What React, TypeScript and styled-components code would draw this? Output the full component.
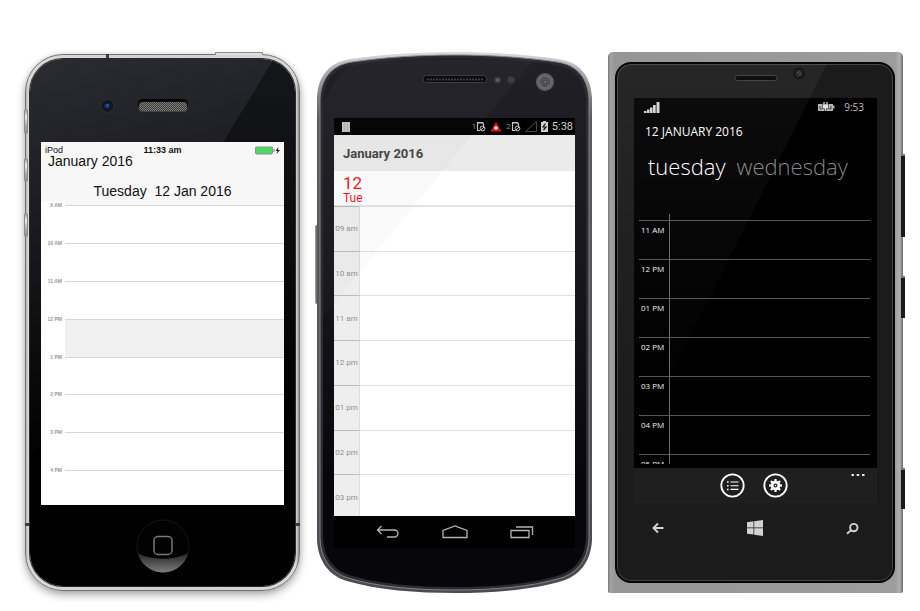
import React from "react";
import styled, { createGlobalStyle, css } from "styled-components";

const GlobalStyle = createGlobalStyle`
  *, *::before, *::after { box-sizing: border-box; }
  body { margin: 0; background: #fff; }
  h1, h2, p, ol { margin: 0; padding: 0; font-weight: 400; }
  ol { list-style: none; }
  button { margin: 0; padding: 0; border: 0; background: none; font: inherit; color: inherit; cursor: pointer; }
  svg { display: block; }
`;

const Stage = styled.main`
  display: grid;
  grid-template-columns: 276fr 275fr 295fr;
  column-gap: 16px;
  align-items: start;
  padding: 52px 17px 18px 25px;
`;

const SideKey = styled.span<{ $side: "left" | "right"; $top: number; $size: number; $kind: "silver" | "slate" | "black" }>`
  position: absolute;
  top: ${(p) => p.$top}px;
  height: ${(p) => p.$size}px;
  ${(p) => (p.$side === "left" ? "left: -2px;" : "right: -2px;")}
  width: 4px;
  ${(p) =>
    p.$kind === "silver" &&
    css`
      border: 1px solid #8a8a8a;
      border-radius: 2px;
      background: linear-gradient(#9b9b9b, #f4f4f4 30%, #b5b5b5 60%, #8d8d8d);
    `}
  ${(p) =>
    p.$kind === "slate" &&
    css`
      border-left: 1px solid #9a9a9c;
      border-radius: 2px;
      background: #6d6d72;
    `}
  ${(p) =>
    p.$kind === "black" &&
    css`
      border-top: 2px solid #777;
      background: #17191b;
    `}
`;

/* ---------- iOS ---------- */

const IosShell = styled.section`
  position: relative;
  margin: 2px 1px 0 0;
  padding: 4px;
  border: 1px solid #747474;
  border-radius: 38px;
  background: linear-gradient(90deg, #aeb0ae, #d8d8d6 2px, #d0d0d0 50%, #d8d8d8 calc(100% - 3px), #8c8c8c);
  box-shadow: 0 4px 8px rgba(0, 0, 0, 0.32), 0 0 5px rgba(0, 0, 0, 0.1);
  font-family: "Liberation Sans", Arial, sans-serif;
  color: #111;
`;

const IosPowerKey = styled.span`
  position: absolute;
  top: -3px;
  right: 36px;
  width: 48px;
  height: 3px;
  border: 1px solid #8f8f8f;
  border-bottom: 0;
  background: #dedede;
`;

const AntennaGap = styled.span<{ $place: "top" | "left" | "right" }>`
  position: absolute;
  background: #3c3c3c;
  ${(p) => p.$place === "top" && "top: -1px; left: 80px; width: 3px; height: 5px;"}
  ${(p) => p.$place === "left" && "left: -1px; bottom: 64px; width: 5px; height: 3px;"}
  ${(p) => p.$place === "right" && "right: -1px; bottom: 64px; width: 5px; height: 3px;"}
`;

const IosGlass = styled.div`
  position: relative;
  overflow: hidden;
  padding: 0 11px;
  border-radius: 33px;
  background: linear-gradient(180deg, #15161a, #0b0c0e 35%, #000 70%);
  box-shadow: 0 0 0 1px #2a2a2a;

  &::before {
    content: "";
    position: absolute;
    inset: 0;
    clip-path: polygon(0 0, 92% 0, 0 76%);
    background: linear-gradient(160deg, rgba(80, 82, 92, 0.36), rgba(70, 72, 80, 0.14) 40%, transparent 72%);
  }
`;

const Hardware = styled.div<{ $height: number }>`
  position: relative;
  display: flex;
  justify-content: center;
  height: ${(p) => p.$height}px;
`;

const IosScreen = styled.div`
  position: relative;
  height: 363px;
  overflow: hidden;
  background: #fff;
`;

const IosHeader = styled.header`
  height: 63px;
  padding-top: 3px;
  background: #f7f7f7;
`;

const IosStatus = styled.div`
  display: grid;
  grid-template-columns: 1fr auto 1fr;
  align-items: center;
  padding: 0 4px;
  font-size: 9px;
  line-height: 10px;

  b { font-weight: 700; }
  svg { justify-self: end; }
`;

const IosMonth = styled.h1`
  padding-left: 7px;
  font-size: 14px;
  line-height: 12px;
`;

const IosDate = styled.h2`
  padding-top: 16px;
  font-size: 14px;
  line-height: 16px;
  text-align: center;
  white-space: pre;
`;

const IosHours = styled.ol`
  display: grid;
  grid-template-rows: repeat(8, 1fr);
  height: 303px;
`;

const IosHour = styled.li`
  display: grid;
  grid-template-columns: 24px 1fr;
`;

const IosTime = styled.time`
  height: 8px;
  margin-top: -4px;
  padding-right: 3px;
  background: #fff;
  color: #999;
  font-size: 5px;
  font-weight: 700;
  line-height: 9px;
  text-align: right;
`;

const IosSlot = styled.div<{ $busy: boolean }>`
  border-top: 1px solid #d6d6d6;
  background: ${(p) => (p.$busy ? "#f0f0f0" : "#fff")};
`;

const HomeButton = styled.button`
  align-self: center;
  width: 54px;
  height: 54px;
`;

function IosPhone() {
  const hours = ["9 AM", "10 AM", "11 AM", "12 PM", "1 PM", "2 PM", "3 PM", "4 PM"];
  return (
    <IosShell aria-label="iOS calendar">
      <SideKey $side="left" $top={54} $size={25} $kind="silver" />
      <SideKey $side="left" $top={103} $size={24} $kind="silver" />
      <SideKey $side="left" $top={158} $size={24} $kind="silver" />
      <IosPowerKey />
      <AntennaGap $place="top" />
      <AntennaGap $place="left" />
      <AntennaGap $place="right" />
      <IosGlass>
        <Hardware $height={83}>
          <svg width="160" height="83" viewBox="0 0 160 83" aria-hidden="true">
            <defs>
              <pattern id="mesh" width="2" height="2" patternUnits="userSpaceOnUse">
                <rect width="2" height="2" fill="#3c3c3c" />
                <rect width="1" height="1" fill="#7c7c78" />
                <rect x="1" y="1" width="1" height="1" fill="#7c7c78" />
              </pattern>
              <linearGradient id="slot" x2="0" y2="1">
                <stop stopColor="#000" />
                <stop offset="1" stopColor="#45464a" />
              </linearGradient>
            </defs>
            <circle cx="24.500" cy="47" r="6.500" fill="#15161b" stroke="#303138" />
            <circle cx="24.500" cy="47" r="3.500" fill="#101a3a" />
            <circle cx="24" cy="47" r="2" fill="#1f3c94" />
            <circle cx="25" cy="46" r="1" fill="#3658b8" />
            <rect x="54" y="40" width="52" height="13" rx="6" fill="url(#slot)" />
            <rect x="55" y="41" width="50" height="10" rx="5" fill="#0a0a0a" />
            <rect x="56" y="43" width="48" height="9" rx="4" fill="url(#mesh)" />
          </svg>
        </Hardware>
        <IosScreen>
          <IosHeader>
            <IosStatus>
              <span>iPod</span>
              <b>11:33 am</b>
              <svg width="26" height="9" viewBox="0 0 26 9" aria-label="Battery charging">
                <rect x="1.500" y="1" width="17" height="7" rx="1" fill="#4cd964" stroke="#8a968c" />
                <path d="M19.500 3h1v3h-1z" fill="#777" />
                <path d="M24.500 1l-3 4h2l-1 3 3.500-4h-2z" fill="#111" />
              </svg>
            </IosStatus>
            <IosMonth>January 2016</IosMonth>
            <IosDate>{"Tuesday  12 Jan 2016"}</IosDate>
          </IosHeader>
          <IosHours>
            {hours.map((h) => (
              <IosHour key={h}>
                <IosTime>{h}</IosTime>
                <IosSlot $busy={h === "12 PM"} />
              </IosHour>
            ))}
          </IosHours>
        </IosScreen>
        <Hardware $height={81}>
          <HomeButton aria-label="Home">
            <svg width="54" height="54" viewBox="0 0 54 54">
              <defs>
                <linearGradient id="homeGloss" x2="0" y2="1">
                  <stop stopColor="#252525" />
                  <stop offset="1" stopColor="#7c7c7c" />
                </linearGradient>
                <linearGradient id="homeRim" x2="0" y2="1">
                  <stop stopColor="#161616" />
                  <stop offset="0.600" stopColor="#141414" />
                  <stop offset="1" stopColor="#808080" />
                </linearGradient>
              </defs>
              <circle cx="27" cy="27" r="26" fill="#020202" stroke="url(#homeRim)" />
              <path d="M2 34.500Q27 45 52 34.500A26 26 0 0 1 2 34.500z" fill="url(#homeGloss)" />
              <rect x="18" y="17.500" width="18" height="18" rx="4" fill="none" stroke="#777" strokeWidth="1.500" />
            </svg>
          </HomeButton>
        </Hardware>
      </IosGlass>
    </IosShell>
  );
}

/* ---------- Android ---------- */

const DroidShell = styled.section`
  position: relative;
  padding: 0 17px;
  font-family: Roboto, sans-serif;
`;

const DroidCase = styled.svg`
  position: absolute;
  inset: 0;
  width: 100%;
  height: 100%;
`;

const DroidGlare = styled.div`
  position: absolute;
  inset: 8px 6px;
  clip-path: polygon(14% 0, 80% 0, 0 49%, 0 8%, 6% 3%);
  background: linear-gradient(rgba(128, 128, 128, 0.05), rgba(128, 128, 128, 0.03) 50%);
  pointer-events: none;
`;

const DroidScreen = styled.div`
  position: relative;
  display: flex;
  flex-direction: column;
  height: 430px;
  background: #fff;
`;

const DroidStatus = styled.div`
  display: flex;
  align-items: center;
  height: 17px;
  padding: 0 2px 0 8px;
  background: #000;
  color: #d0d0d0;
  font-size: 11px;
  line-height: 16px;
`;

const StatusGroup = styled.div`
  display: flex;
  align-items: center;
  gap: 4px;
  margin-left: auto;
`;

const Sim = styled.span`
  display: flex;
  align-items: center;
  color: #8c8c8c;
  font-size: 8px;
`;

const DroidTitle = styled.h1`
  height: 36px;
  padding-left: 9px;
  background: #ebebeb;
  color: #444;
  font-size: 13px;
  font-weight: 700;
  line-height: 37px;
`;

const DroidDay = styled.h2`
  display: flex;
  flex-direction: column;
  padding: 3px 0 1px 9px;
  border-bottom: 1px solid #e6e6e6;
  color: #fb1018;
  font-size: 12px;
  line-height: 12px;
`;

const DroidDayNumber = styled.span`
  font-size: 17px;
  line-height: 18px;
`;

const DroidHoursClip = styled.div`
  flex: 1;
  min-height: 0;
  overflow: hidden;
`;

const DroidHours = styled.ol`
  display: grid;
  grid-template-rows: repeat(7, 1fr);
  height: 313px;
`;

const DroidHour = styled.li`
  display: grid;
  grid-template-columns: 26px 1fr;
`;

const DroidTime = styled.time`
  display: flex;
  align-items: center;
  justify-content: center;
  border-top: 1px solid #bcbcbc;
  border-right: 1px solid #dcdcdc;
  background: #eee;
  color: #8e8e8e;
  font-size: 8px;
`;

const DroidSlot = styled.div`
  border-top: 1px solid #e0e0e0;
`;

const DroidNav = styled.nav`
  display: grid;
  grid-template-columns: repeat(3, 1fr);
  height: 32px;
  padding: 0 20px;
  background: #000;
`;

const NavButton = styled.button`
  display: flex;
  align-items: center;
  justify-content: center;
  color: #b4b4b4;
`;

function SimIcon() {
  return (
    <svg width="10" height="11" viewBox="0 0 10 11" aria-hidden="true">
      <path d="M1.500 9.500v-8h5l1 1.500v3" fill="none" stroke="#c4c4c4" strokeWidth="1.200" />
      <path d="M1 1h5.500l1 1.500H1z" fill="#c4c4c4" />
      <path d="M1 9.500h3" stroke="#c4c4c4" />
      <circle cx="6.500" cy="7.500" r="2.400" fill="#111" stroke="#c4c4c4" />
      <path d="M5 9l3-3" stroke="#c4c4c4" />
    </svg>
  );
}

function DroidPhone() {
  const hours = ["09 am", "10 am", "11 am", "12 pm", "01 pm", "02 pm", "03 pm"];
  return (
    <DroidShell aria-label="Android calendar">
      <SideKey $side="left" $top={173} $size={79} $kind="slate" />
      <DroidCase viewBox="0 0 275 541" preserveAspectRatio="none" aria-hidden="true">
        <defs>
          <linearGradient id="rim" x2="0" y2="1">
            <stop stopColor="#dcdce0" />
            <stop offset="0.030" stopColor="#b4b4b8" />
            <stop offset="0.120" stopColor="#5c5c60" />
            <stop offset="1" stopColor="#4a4a50" />
          </linearGradient>
          <linearGradient id="bezel" x2="0" y2="1">
            <stop stopColor="#212026" />
            <stop offset="0.450" stopColor="#16151b" />
            <stop offset="0.800" stopColor="#07060b" />
          </linearGradient>
        </defs>
        <path
          d="M0 46C1 24 12 10 34 7C68 2 104 0 137.500 0C171 0 207 2 241 7C263 10 274 24 275 46V488C274 510 262 524 245 529C215 538 175 541 137.500 541C100 541 60 538 30 529C13 524 1 510 0 488Z"
          fill="url(#rim)"
        />
        <path
          d="M3 47C4 27 14 13 35 10C69 5 104 3 137.500 3C171 3 206 5 240 10C261 13 271 27 272 47V487C271 508 260 521 244 526C215 535 175 538 137.500 538C100 538 60 535 31 526C15 521 4 508 3 487Z"
          fill="#2b2b30"
          stroke="#85858a"
        />
        <path
          d="M6 48C7 29 16 16 36 13C70 8 104 6 137.500 6C171 6 205 8 239 13C259 16 268 29 269 48V486C268 506 258 518 243 523C215 532 175 535 137.500 535C100 535 60 532 32 523C17 518 7 506 6 486Z"
          fill="url(#bezel)"
        />
      </DroidCase>
      <Hardware $height={66}>
        <svg width="240" height="66" viewBox="0 0 240 66" aria-hidden="true">
          <rect x="88" y="23.500" width="64" height="7" rx="3.500" fill="#050507" stroke="#38383d" />
          <path d="M92 27.500h56" stroke="#3a3a3f" strokeWidth="2" strokeDasharray="2 1" />
          <circle cx="162.500" cy="28" r="3.500" fill="#37373d" />
          <circle cx="162.500" cy="28" r="1.500" fill="#64646b" />
          <circle cx="176" cy="28" r="3.500" fill="#3a3a3e" />
          <circle cx="210" cy="30" r="9" fill="#5f5f63" />
          <circle cx="210" cy="30" r="7" fill="#6a6a6e" />
          <circle cx="210" cy="30" r="4.500" fill="#57575c" stroke="#45454a" />
          <circle cx="210" cy="30" r="2" fill="#6c6c72" stroke="#3c3c42" />
        </svg>
      </Hardware>
      <DroidScreen>
        <DroidStatus>
          <svg width="8" height="10" viewBox="0 0 8 10" aria-hidden="true">
            <path d="M0 0h8v10H0z" fill="#c4c4c4" />
            <path d="M2.500 0v10M5.500 0v10" stroke="#b4b4b4" />
          </svg>
          <StatusGroup>
            <Sim>1<SimIcon /></Sim>
            <svg width="12" height="10" viewBox="0 0 12 10" aria-hidden="true">
              <path d="M6 0l5.500 9.500H0.500z" fill="#e01018" />
              <path d="M6 4v4M4 6h4" stroke="#fff" strokeWidth="1.300" />
            </svg>
            <Sim>2<SimIcon /></Sim>
            <svg width="12" height="11" viewBox="0 0 12 11" aria-hidden="true">
              <path d="M11.500 0.500v10H0.500z" fill="none" stroke="#4a4a4a" />
            </svg>
            <svg width="7" height="11" viewBox="0 0 7 11" aria-hidden="true">
              <path d="M2 0h3v1h2v10H0V1h2z" fill="#d0d0d0" />
              <path d="M4.500 2.500L2 6h3L2.500 9" fill="none" stroke="#111" strokeWidth="1.200" />
            </svg>
            <span>5:38</span>
          </StatusGroup>
        </DroidStatus>
        <DroidTitle>January 2016</DroidTitle>
        <DroidDay>
          <DroidDayNumber>12</DroidDayNumber>
          <span>Tue</span>
        </DroidDay>
        <DroidHoursClip>
          <DroidHours>
            {hours.map((h) => (
              <DroidHour key={h}>
                <DroidTime>{h}</DroidTime>
                <DroidSlot />
              </DroidHour>
            ))}
          </DroidHours>
        </DroidHoursClip>
        <DroidNav>
          <NavButton aria-label="Back">
            <svg width="24" height="14" viewBox="0 0 24 14" fill="none" stroke="currentColor" strokeWidth="1.300">
              <path d="M5.500 1L1.500 5l4 4M2 5h16.500a3.500 3.500 0 0 1 0 7H11" />
            </svg>
          </NavButton>
          <NavButton aria-label="Home">
            <svg width="26" height="14" viewBox="0 0 26 14" fill="none" stroke="currentColor" strokeWidth="1.300">
              <path d="M1 12.500V5.500L13 1l12 4.500v7z" />
            </svg>
          </NavButton>
          <NavButton aria-label="Recent apps">
            <svg width="24" height="14" viewBox="0 0 24 14" fill="none" stroke="currentColor" strokeWidth="1.300">
              <path d="M1 5.500h18v7H1zM6 2h16.500v8" />
            </svg>
          </NavButton>
        </DroidNav>
      </DroidScreen>
      <Hardware $height={45} />
      <DroidGlare />
    </DroidShell>
  );
}

/* ---------- Windows Phone ---------- */

const WinShell = styled.section`
  position: relative;
  padding: 10px 8px 10px 7px;
  border-radius: 5px 5px 2px 2px;
  background: linear-gradient(90deg, #808080, #808080 1px, #a4a4a4 2px, #969696 7px, #9c9c9c calc(100% - 8px), #b0b0b0 calc(100% - 3px), #777 calc(100% - 1px));
  font-family: "Open Sans", "Noto Sans", sans-serif;
  color: #fff;
`;

const WinGlass = styled.div`
  position: relative;
  overflow: hidden;
  padding: 0 16px 0 17px;
  border: 2px solid #050505;
  border-radius: 16px;
  background: #1b1b1b;
  box-shadow: inset 0 0 0 1px #454545;
`;

const WinGlare = styled.div`
  position: absolute;
  inset: 0;
  clip-path: polygon(0 0, 76% 0, 0 81%);
  background: linear-gradient(180deg, rgba(255, 255, 255, 0.05), rgba(255, 255, 255, 0.02) 40%, transparent 75%);
  pointer-events: none;
`;

const WinScreen = styled.div`
  display: flex;
  flex-direction: column;
  height: 405px;
  background: #000;
`;

const WinStatus = styled.div`
  display: flex;
  align-items: center;
  gap: 9px;
  height: 18px;
  padding: 0 13px 0 10px;
  color: #bdbdbd;
  font-size: 10px;
  line-height: 18px;

  svg:first-child { margin-right: auto; }
`;

const WinDate = styled.h1`
  padding: 8px 0 0 11px;
  font-size: 12px;
  line-height: 16px;
`;

const WinDays = styled.div`
  display: flex;
  gap: 11px;
  padding: 10px 0 0 14px;
`;

const WinDay = styled.button<{ $current: boolean }>`
  color: ${(p) => (p.$current ? "#fff" : "#858585")};
  font-size: 22px;
  font-weight: 300;
  line-height: 32px;
`;

const WinHours = styled.ol`
  height: 250px;
  margin: 32px 7px 4px 5px;
  padding-top: 6px;
  overflow: hidden;
  background: linear-gradient(#6a6a6a, #6a6a6a) 30px 0 / 1px 100% no-repeat;
`;

const WinHour = styled.li`
  height: 39px;
  padding: 4px 0 0 2px;
  border-top: 1px solid #575757;
  color: #eee;
  font-size: 8px;
  line-height: 9px;

  time { display: block; }
`;

const WinAppBar = styled.div`
  display: grid;
  grid-template-columns: 1fr auto 1fr;
  align-items: center;
  height: 35px;
  padding: 0 12px 0 9px;
  background: #1f1f1f;
`;

const WinActions = styled.div`
  display: flex;
  grid-column: 2;
  gap: 18px;
`;

const MoreButton = styled.button`
  align-self: start;
  justify-self: end;
  padding-top: 5px;
`;

const WinNav = styled.nav`
  display: flex;
  justify-content: space-between;
  height: 78px;
  padding: 13px 13px 0 12px;
`;

const WinKey = styled.button`
  display: flex;
  align-items: center;
  justify-content: center;
  width: 24px;
  height: 24px;
  color: #d2d2d2;
`;

const gearTeeth = [0, 45, 90, 135, 180, 225, 270, 315];

function WinPhone() {
  const hours = ["11 AM", "12 PM", "01 PM", "02 PM", "03 PM", "04 PM", "05 PM"];
  return (
    <WinShell aria-label="Windows Phone calendar">
      <SideKey $side="right" $top={102} $size={83} $kind="black" />
      <SideKey $side="right" $top={224} $size={42} $kind="black" />
      <SideKey $side="right" $top={416} $size={41} $kind="black" />
      <WinGlass>
        <Hardware $height={34}>
          <svg width="120" height="34" viewBox="0 0 120 34" aria-hidden="true">
            <rect x="39" y="11.500" width="42" height="5" rx="2.500" fill="#030303" stroke="#3b3b3b" />
            <circle cx="103" cy="9.500" r="6" fill="#0c0c0c" stroke="#141414" />
            <circle cx="103" cy="9.500" r="3.500" fill="#232026" />
            <path d="M101.500 9l1.500-1.500" stroke="#4c8a7a" />
            <path d="M103.500 11l1-1.500" stroke="#95527c" />
          </svg>
        </Hardware>
        <WinScreen>
          <WinStatus>
            <svg width="16" height="11" viewBox="0 0 16 11" fill="#d4d4d4" aria-label="Signal">
              <path d="M0 9h2.500v2H0zM3 7.500h2.500V11H3zM6 5.500h2.500V11H6zM9 3h2.700v8H9zM12.500 0h3v11h-3z" />
            </svg>
            <svg width="17" height="10" viewBox="0 0 17 10" aria-label="Battery charging">
              <path d="M0 2h15v1.500h1.500v3H15V9H0z" fill="#b8b8b8" />
              <path d="M2 4v3h2M13 4v3h-2" fill="none" stroke="#444" />
              <path d="M4.500 2h6v4.500h-2V9h-2V6.500h-2z" fill="#e6e6e6" stroke="#222" strokeWidth="0.600" />
              <path d="M6 0v2.500M9 0v2.500" stroke="#e6e6e6" strokeWidth="1.200" />
            </svg>
            <span>9:53</span>
          </WinStatus>
          <WinDate>12 JANUARY 2016</WinDate>
          <WinDays>
            <WinDay $current>tuesday</WinDay>
            <WinDay $current={false}>wednesday</WinDay>
          </WinDays>
          <WinHours>
            {hours.map((h) => (
              <WinHour key={h}>
                <time>{h}</time>
              </WinHour>
            ))}
          </WinHours>
          <WinAppBar>
            <WinActions>
              <button aria-label="Agenda">
                <svg width="25" height="25" viewBox="0 0 25 25" fill="none" stroke="#fff">
                  <circle cx="12.500" cy="12.500" r="11.200" strokeWidth="1.800" />
                  <path d="M10.500 9h8M10.500 12.700h8M10.500 16.400h8" strokeWidth="1.100" />
                  <path d="M7 9h1.600M7 12.700h1.600M7 16.400h1.600" strokeWidth="1.500" />
                </svg>
              </button>
              <button aria-label="Settings">
                <svg width="25" height="25" viewBox="0 0 25 25" fill="none" stroke="#fff">
                  <circle cx="12.500" cy="12.500" r="11.200" strokeWidth="1.800" />
                  <circle cx="12.500" cy="12.500" r="3.400" strokeWidth="2.800" />
                  {gearTeeth.map((a) => (
                    <path key={a} d="M12.500 6v2.500" strokeWidth="2.200" transform={`rotate(${a} 12.500 12.500)`} />
                  ))}
                  <circle cx="12.500" cy="12.500" r="0.800" fill="#fff" stroke="none" />
                </svg>
              </button>
            </WinActions>
            <MoreButton aria-label="More">
              <svg width="14" height="4" viewBox="0 0 14 4" fill="#e6e6e6">
                <path d="M0.500 1H3v2H0.500zM5.700 1h2.500v2H5.700zM11 1h2.500v2H11z" />
              </svg>
            </MoreButton>
          </WinAppBar>
        </WinScreen>
        <WinNav>
          <WinKey aria-label="Back">
            <svg width="12" height="12" viewBox="0 0 12 12" fill="none" stroke="currentColor" strokeWidth="1.900">
              <path d="M6 1.500L1.500 6 6 10.500M1.500 6h10" />
            </svg>
          </WinKey>
          <WinKey aria-label="Start">
            <svg width="16" height="16" viewBox="0 0 16 16" fill="currentColor">
              <path d="M0 2.300l6.500-1v6.300H0zM7.200 1.200L16 0v7.600H7.200zM0 8.300h6.500v6.300L0 13.700zM7.200 8.300H16V16l-8.800-1.300z" />
            </svg>
          </WinKey>
          <WinKey aria-label="Search">
            <svg width="13" height="13" viewBox="0 0 13 13" fill="none" stroke="currentColor" strokeWidth="1.900">
              <circle cx="7.800" cy="5.600" r="3.700" />
              <path d="M5 8.300L1 11.800" />
            </svg>
          </WinKey>
        </WinNav>
        <WinGlare />
      </WinGlass>
    </WinShell>
  );
}

export default function App() {
  return (
    <>
      <GlobalStyle />
      <Stage>
        <IosPhone />
        <DroidPhone />
        <WinPhone />
      </Stage>
    </>
  );
}
